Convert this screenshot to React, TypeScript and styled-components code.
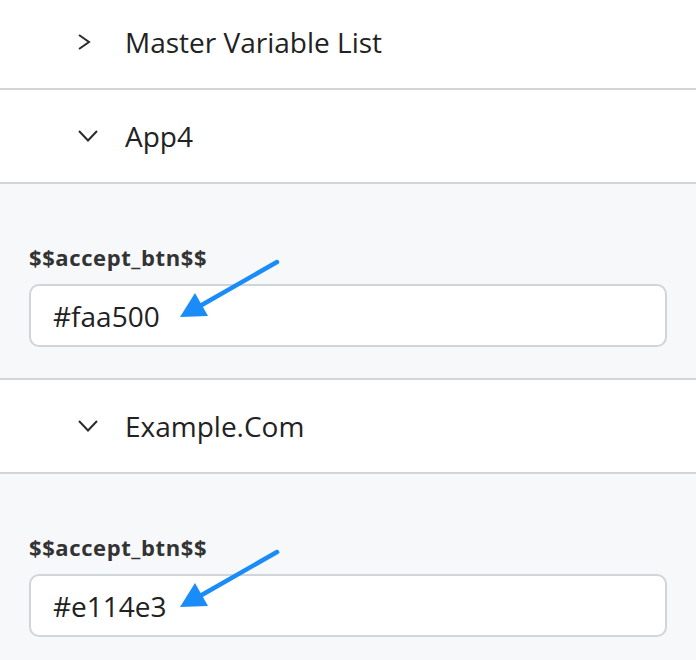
import { FC } from 'react';
import styled, { createGlobalStyle } from 'styled-components';

const Global = createGlobalStyle`
  body {
    margin: 0;
    background: #ffffff;
    font-family: "Open Sans", "Noto Sans", sans-serif;
    color: #222;
  }
`;

type Section = {
  title: string
  open: boolean
  value?: string
};

const sections: Section[] = [
  { title: 'Master Variable List', open: false },
  { title: 'App4', open: true, value: '#faa500' },
  { title: 'Example.Com', open: true, value: '#e114e3' },
];

const App: FC = () => {
  return (
    <>
      <Global />
      <Page>
        {sections.map((s) => (
          <div key={s.title}>
            <Header>
              <Chevron open={s.open} />
              <HeaderTitle>{s.title}</HeaderTitle>
            </Header>
            {s.open && s.value && (
              <Panel>
                <Label>$$accept_btn$$</Label>
                <Input readOnly value={s.value} />
                <Arrow />
              </Panel>
            )}
          </div>
        ))}
      </Page>
    </>
  );
};

const Chevron: FC<{ open: boolean }> = ({ open }) => (
  <ChevronBox>
    {open ? (
      <svg width="22" height="14" viewBox="0 0 22 14">
        <path d="M2 2 L11 11.5 L20 2" fill="none" stroke="#2b2b2b" strokeWidth="2" />
      </svg>
    ) : (
      <svg width="14" height="18" viewBox="0 0 14 18">
        <path d="M2 2 L12 9 L2 16" fill="none" stroke="#2b2b2b" strokeWidth="2" />
      </svg>
    )}
  </ChevronBox>
);

const Arrow: FC = () => (
  <ArrowSvg width="120" height="80" viewBox="0 0 120 80">
    <line x1="107" y1="7" x2="30" y2="51" stroke="#1a8cf8" strokeWidth="4.5" strokeLinecap="round" />
    <polygon points="10,62 25,38 38,61" fill="#1a8cf8" />
  </ArrowSvg>
);

const Page = styled.div`
  margin-top: -4px;
  width: 696px;
  height: 664px;
  overflow: hidden;
`;

const Header = styled.div`
  display: flex;
  align-items: center;
  height: 92px;
  border-bottom: 2px solid #d3d6d9;
  background: #fff;
`;

const ChevronBox = styled.div`
  width: 46px;
  margin-left: 77px;
  display: flex;
  align-items: center;
`;

const HeaderTitle = styled.span`
  font-size: 28px;
  color: #222;
  margin-left: 2px;
`;

const Panel = styled.div`
  position: relative;
  background: #f7f8fa;
  border-bottom: 2px solid #d3d6d9;
  padding: 58px 29px 31px;
  display: flex;
  flex-direction: column;
`;

const Label = styled.div`
  font-size: 22px;
  font-weight: 700;
  letter-spacing: 0.6px;
  color: #333;
  line-height: 30px;
  margin-bottom: 12px;
`;

const Input = styled.input`
  box-sizing: border-box;
  height: 63px;
  width: 100%;
  border: 2px solid #cfd5d9;
  border-radius: 10px;
  background: #fff;
  padding: 0 22px;
  font-family: "Open Sans", "Noto Sans", sans-serif;
  font-size: 28px;
  color: #222;
  outline: none;
`;

const ArrowSvg = styled.svg`
  position: absolute;
  left: 170px;
  top: 71px;
`;

export default App;
